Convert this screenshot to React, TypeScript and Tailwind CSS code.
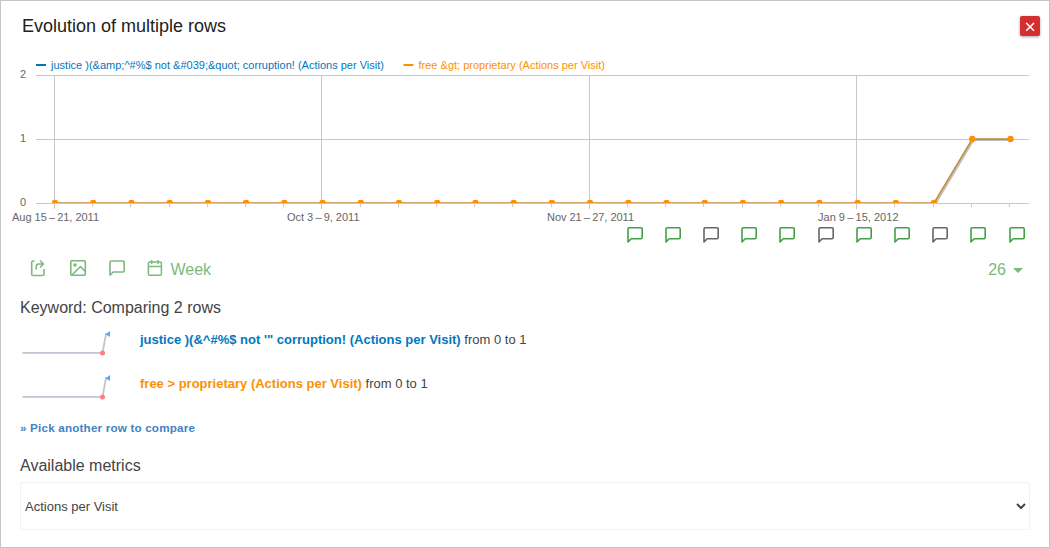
import React from "react";

const POINTS = Array.from({ length: 26 }, (_, i) => ({
  x: 55 + 38.22 * i,
  tick: Math.round(54 + 38.2 * i) + 0.5,
  note: Math.floor(54.01 + 38.2 * i),
  value: i >= 24 ? 1 : 0,
}));
const LINE = POINTS.map((p) => `${p.x},${p.value ? 139 : 203}`).join(" ");
const LABELS = ["Aug 15\u2009–\u200921, 2011", "Oct 3\u2009–\u20099, 2011", "Nov 21\u2009–\u200927, 2011", "Jan 9\u2009–\u200915, 2012"];
const LABEL_X = [12, 287, 547, 818];
const LABEL_W = [87, 72.5, 87, 80.5];
const EMPTY_NOTES = [17, 20, 23];
const BUBBLE = "M1 15.2V2.2Q1 1 2.2 1H14Q15.2 1 15.2 2.2V10.8Q15.2 12 14 12H4.2L1 15.2Z";

function Chart() {
  return (
    <svg className="block h-[196px] w-[1048px]" viewBox="1 50 1048 196" fontFamily="Liberation Sans, Arial, sans-serif" fontSize="11">
      <defs>
        <clipPath id="plot">
          <rect x="36" y="70" width="993" height="133" />
        </clipPath>
      </defs>
      <rect x="36" y="64" width="10" height="2" fill="#0277bd" />
      <text x="51" y="69" fill="#0277bd" textLength="333">{"justice )(&amp;^#%$ not &#039;&quot; corruption! (Actions per Visit)"}</text>
      <rect x="403.5" y="64" width="10" height="2" fill="#ff8f00" />
      <text x="418.5" y="69" fill="#ff8f00" textLength="186.5">{"free &gt; proprietary (Actions per Visit)"}</text>
      <g stroke="#c8c8c8">
        {[75.5, 139.5, 203.5].map((y) => (
          <line key={y} x1="36" x2="1029" y1={y} y2={y} />
        ))}
        {POINTS.map((p, i) => (
          <line key={i} x1={p.tick} x2={p.tick} y1={i % 7 === 0 ? 75 : 204} y2={i % 7 === 0 ? 209 : 207} />
        ))}
      </g>
      <g fill="#666">
        <text x="20" y="78">2</text>
        <text x="20" y="142">1</text>
        <text x="20" y="206">0</text>
        {LABELS.map((label, i) => (
          <text key={label} x={LABEL_X[i]} y="221" textLength={LABEL_W[i]}>{label}</text>
        ))}
      </g>
      <g clipPath="url(#plot)" fill="none">
        <polyline points={LINE} stroke="#000" strokeOpacity=".25" strokeWidth="2" transform="translate(1.2 1)" />
        <polyline points={LINE} stroke="#c08c38" strokeWidth="1.5" />
        {POINTS.map((p, i) => (
          <circle key={i} cx={p.x} cy={p.value ? 139 : 203} r="3.2" fill="#ff8f00" />
        ))}
      </g>
      {POINTS.slice(15).map((p, i) => (
        <path key={i} d={BUBBLE} transform={`translate(${p.note} 226.7)`} fill="none" strokeWidth="1.6" strokeLinejoin="round" stroke={EMPTY_NOTES.includes(i + 15) ? "#666" : "#43a047"} />
      ))}
    </svg>
  );
}

function Comparison({ name, tone }: { name: string; tone: string }) {
  return (
    <div className="flex h-[44px] items-start">
      <svg className="h-[26px] w-[119px] shrink-0" viewBox="20 330 119 26" fill="none">
        <path d="M22.5 352.8H102.5L106 334H109" stroke="#bfc6d1" strokeWidth="1.8" />
        <circle cx="102.5" cy="353" r="2.5" fill="#ff7f7f" />
        <path d="M105.5 334.3L110 331V337Z" fill="#55aaff" />
      </svg>
      <p className="pl-[1px] text-[13px] leading-5 text-[#444]">
        <strong className={tone}>{name}</strong> from 0 to 1
      </p>
    </div>
  );
}

export default function App() {
  return (
    <main className="h-[548px] w-[1050px] overflow-hidden border border-[#c5c5c5] bg-white font-['Liberation_Sans',Arial,sans-serif] text-[#444]">
      <header className="flex h-[49px] items-start justify-between pr-[9px] pl-[21px]">
        <h1 className="pt-[12px] text-[18px] leading-[26px] text-[#212121]">Evolution of multiple rows</h1>
        <button aria-label="Close" className="mt-[15px] flex h-5 w-5 items-center justify-center rounded-[2px] bg-[#d32f2f] shadow-[0_1px_3px_rgba(0,0,0,0.35)]">
          <svg className="h-[20px] w-[20px]" viewBox="0 0 20 20" stroke="white" strokeWidth="1.6">
            <path d="M6.2 7L14 14.8M14 7L6.2 14.8" />
          </svg>
        </button>
      </header>
      <Chart />
      <div className="flex h-[46px] items-center justify-between px-[29px] text-[16px] text-[#7cb97f]">
        <div className="flex items-center">
          <svg className="-mt-[2px] h-[18px] w-[16px]" viewBox="30 259 16 18" fill="none" stroke="currentColor" strokeWidth="1.6" strokeLinecap="round" strokeLinejoin="round">
            <path d="M34 261H33Q31.7 261 31.7 262.3V274.2Q31.7 275.5 33 275.5H42.7Q44 275.5 44 274.2V269.5M36.3 269V266.5Q36.3 264 38.8 264H43M40.5 261L43.5 264L40.5 267" />
          </svg>
          <svg className="-mt-[2px] ml-[23px] h-[18px] w-[18px]" viewBox="69 259 18 18" fill="none" stroke="currentColor" strokeWidth="1.6" strokeLinejoin="round">
            <rect x="70.8" y="260.8" width="14.5" height="14.5" rx="1" />
            <circle cx="75" cy="265" r="1.8" fill="currentColor" stroke="none" />
            <path d="M72 275L80.5 266.5L85.3 271.5" />
          </svg>
          <svg className="-mt-[2px] ml-[21px] h-[18px] w-[18px]" viewBox="-1 -1 18 18" fill="none" stroke="currentColor" strokeWidth="1.6" strokeLinejoin="round">
            <path d={BUBBLE} />
          </svg>
          <svg className="-mt-[2px] ml-[21px] h-[18px] w-[16px]" viewBox="147.3 259 16 18" fill="none" stroke="currentColor" strokeWidth="1.5" strokeLinejoin="round">
            <rect x="148.7" y="262" width="13" height="13.3" rx="1.2" />
            <path d="M148.7 266.5H161.7M152 260V264M158.3 260V264" />
          </svg>
          <span className="pt-[2px] pl-[7.5px]">Week</span>
        </div>
        <div className="flex items-center">
          <span className="pt-[2px] pr-[7px]">26</span>
          <svg className="mt-[3px] -mr-[3px] h-[5px] w-[10px]" viewBox="0 0 10 5">
            <path d="M0 0H10L5 5Z" fill="currentColor" />
          </svg>
        </div>
      </div>
      <section className="px-[19px]">
        <h2 className="h-[38px] pt-[5px] text-[16px] leading-[22px]">Keyword: Comparing 2 rows</h2>
        <Comparison name={"justice )(&^#%$ not '\" corruption! (Actions per Visit)"} tone="text-[#0277bd]" />
        <Comparison name="free > proprietary (Actions per Visit)" tone="text-[#ff8f00]" />
        <a href="#" className="block h-[37px] pt-[2px] text-[11.7px] leading-4 font-bold tracking-[0.17px] text-[#4183c4]">» Pick another row to compare</a>
        <h2 className="h-[27px] text-[16px] leading-[22px]">Available metrics</h2>
        <select className="block h-[48px] w-[1010px] rounded-[2px] border border-[#f2f2f2] bg-white py-[5px] text-[13px]">
          <option>Actions per Visit</option>
        </select>
      </section>
    </main>
  );
}
